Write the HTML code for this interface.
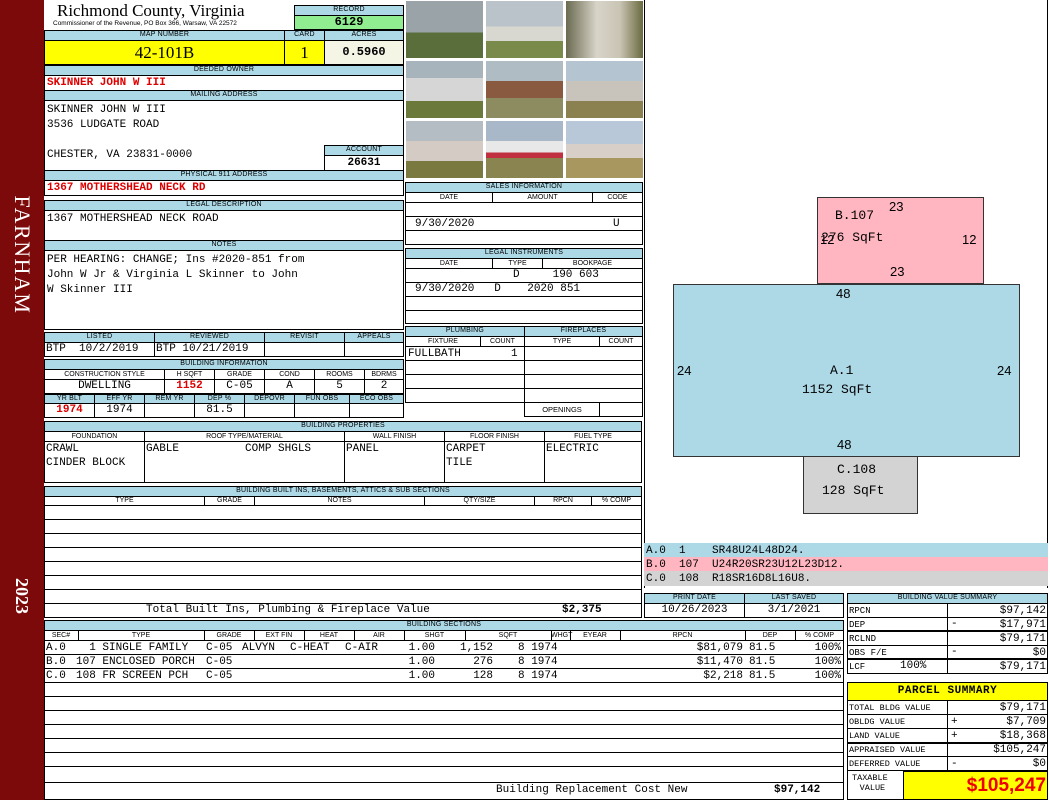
<!DOCTYPE html>
<html><head><meta charset="utf-8"><style>
*{box-sizing:border-box;margin:0;padding:0}
body{width:1050px;height:800px;position:relative;background:#fff;overflow:hidden;font-family:"Liberation Mono",monospace}
div{position:absolute}
.h{background:#add8e6;border:1px solid #000;font:7px/8px "Liberation Sans",sans-serif;text-align:center;color:#000;letter-spacing:.2px}
.b{border:1px solid #000;background:#fff}
.m{font-family:"Liberation Mono",monospace;font-size:11px;line-height:13px;white-space:pre}
.r{color:#d00;font-weight:bold}
.s{font:7px/9px "Liberation Sans",sans-serif;text-align:center}
.ln{height:1px;background:#000}
.ph{width:79px;height:59px;border:1px solid #fff}
.cr{text-align:right}
</style></head><body>
<div style="left:0;top:0;width:44px;height:800px;background:#7d0a0a"></div>
<div style="left:-58px;top:242px;width:160px;height:26px;transform:rotate(90deg);color:#fff;font:22px/26px 'Liberation Serif',serif;text-align:center;letter-spacing:1.5px">FARNHAM</div>
<div style="left:-13px;top:583px;width:70px;height:26px;transform:rotate(90deg);color:#fff;font:bold 18px/26px 'Liberation Serif',serif;text-align:center">2023</div>

<div style="left:57px;top:2px;font:17px/18px 'Liberation Serif',serif">Richmond County, Virginia</div>
<div style="left:53px;top:20px;font:6.5px/7px 'Liberation Sans',sans-serif">Commissioner of the Revenue, PO Box 366, Warsaw, VA 22572</div>
<div class="h" style="left:294px;top:5px;width:110px;height:11px">RECORD</div>
<div style="left:294px;top:15px;width:110px;height:15px;background:#90ee90;border:1px solid #000;font:bold 12px/13px 'Liberation Mono';text-align:center">6129</div>
<div class="h" style="left:44px;top:30px;width:241px;height:11px">MAP NUMBER</div>
<div class="h" style="left:284px;top:30px;width:41px;height:11px">CARD</div>
<div class="h" style="left:324px;top:30px;width:80px;height:11px">ACRES</div>
<div style="left:44px;top:40px;width:241px;height:25px;background:#ff0;border:1px solid #000;font:17px/23px 'Liberation Serif',serif;text-align:center">42-101B</div>
<div style="left:284px;top:40px;width:41px;height:25px;background:#ff0;border:1px solid #000;font:17px/23px 'Liberation Serif',serif;text-align:center">1</div>
<div style="left:324px;top:40px;width:80px;height:25px;background:#f5f5e6;border:1px solid #000;font:bold 12px/23px 'Liberation Mono';text-align:center">0.5960</div>
<div class="h" style="left:44px;top:65px;width:360px;height:11px">DEEDED OWNER</div>
<div class="b" style="left:44px;top:75px;width:360px;height:16px"></div>
<div class="m r" style="left:47px;top:77px">SKINNER JOHN W III</div>
<div class="h" style="left:44px;top:90px;width:360px;height:11px">MAILING ADDRESS</div>
<div class="b" style="left:44px;top:100px;width:360px;height:71px"></div>
<div class="m" style="left:47px;top:103px;line-height:15px">SKINNER JOHN W III
3536 LUDGATE ROAD

CHESTER, VA 23831-0000</div>
<div class="h" style="left:324px;top:145px;width:80px;height:11px">ACCOUNT</div>
<div class="b m" style="left:324px;top:155px;width:80px;height:16px;font-weight:bold;text-align:center;line-height:15px">26631</div>
<div class="h" style="left:44px;top:170px;width:360px;height:11px">PHYSICAL 911 ADDRESS</div>
<div class="b" style="left:44px;top:180px;width:360px;height:16px"></div>
<div class="m r" style="left:47px;top:182px">1367 MOTHERSHEAD NECK RD</div>
<div class="h" style="left:44px;top:200px;width:360px;height:11px">LEGAL DESCRIPTION</div>
<div class="b" style="left:44px;top:210px;width:360px;height:31px"></div>
<div class="m" style="left:47px;top:213px">1367 MOTHERSHEAD NECK ROAD</div>
<div class="h" style="left:44px;top:240px;width:360px;height:11px">NOTES</div>
<div class="b" style="left:44px;top:250px;width:360px;height:80px"></div>
<div class="m" style="left:47px;top:253px;line-height:15px">PER HEARING: CHANGE; Ins #2020-851 from
John W Jr &amp; Virginia L Skinner to John
W Skinner III</div>

<div class="h" style="left:44px;top:332px;width:111px;height:11px">LISTED</div>
<div class="h" style="left:154px;top:332px;width:111px;height:11px">REVIEWED</div>
<div class="h" style="left:264px;top:332px;width:81px;height:11px">REVISIT</div>
<div class="h" style="left:344px;top:332px;width:60px;height:11px">APPEALS</div>
<div class="b m" style="left:44px;top:342px;width:111px;height:15px;padding-left:1px">BTP  10/2/2019</div>
<div class="b m" style="left:154px;top:342px;width:111px;height:15px;padding-left:1px">BTP 10/21/2019</div>
<div class="b" style="left:264px;top:342px;width:81px;height:15px"></div>
<div class="b" style="left:344px;top:342px;width:60px;height:15px"></div>

<div class="h" style="left:44px;top:359px;width:360px;height:11px">BUILDING INFORMATION</div>
<div class="b s" style="left:44px;top:369px;width:121px;height:11px;line-height:9px">CONSTRUCTION STYLE</div>
<div class="b s" style="left:164px;top:369px;width:51px;height:11px;line-height:9px">H SQFT</div>
<div class="b s" style="left:214px;top:369px;width:51px;height:11px;line-height:9px">GRADE</div>
<div class="b s" style="left:264px;top:369px;width:51px;height:11px;line-height:9px">COND</div>
<div class="b s" style="left:314px;top:369px;width:51px;height:11px;line-height:9px">ROOMS</div>
<div class="b s" style="left:364px;top:369px;width:40px;height:11px;line-height:9px">BDRMS</div>
<div class="b m" style="left:44px;top:379px;width:121px;height:15px;text-align:center">DWELLING</div>
<div class="b m r" style="left:164px;top:379px;width:51px;height:15px;text-align:center">1152</div>
<div class="b m" style="left:214px;top:379px;width:51px;height:15px;text-align:center">C-05</div>
<div class="b m" style="left:264px;top:379px;width:51px;height:15px;text-align:center">A</div>
<div class="b m" style="left:314px;top:379px;width:51px;height:15px;text-align:center">5</div>
<div class="b m" style="left:364px;top:379px;width:40px;height:15px;text-align:center">2</div>
<div class="h" style="left:44px;top:394px;width:51px;height:10px;line-height:8px">YR BLT</div>
<div class="h" style="left:94px;top:394px;width:51px;height:10px;line-height:8px">EFF YR</div>
<div class="h" style="left:144px;top:394px;width:51px;height:10px;line-height:8px">REM YR</div>
<div class="h" style="left:194px;top:394px;width:51px;height:10px;line-height:8px">DEP %</div>
<div class="h" style="left:244px;top:394px;width:51px;height:10px;line-height:8px">DEPOVR</div>
<div class="h" style="left:294px;top:394px;width:56px;height:10px;line-height:8px">FUN OBS</div>
<div class="h" style="left:349px;top:394px;width:55px;height:10px;line-height:8px">ECO OBS</div>
<div class="b m r" style="left:44px;top:403px;width:51px;height:15px;text-align:center">1974</div>
<div class="b m" style="left:94px;top:403px;width:51px;height:15px;text-align:center">1974</div>
<div class="b" style="left:144px;top:403px;width:51px;height:15px"></div>
<div class="b m" style="left:194px;top:403px;width:51px;height:15px;text-align:center">81.5</div>
<div class="b" style="left:244px;top:403px;width:51px;height:15px"></div>
<div class="b" style="left:294px;top:403px;width:56px;height:15px"></div>
<div class="b" style="left:349px;top:403px;width:55px;height:15px"></div>

<div style="left:405px;top:0;width:240px;height:180px;background:#fff">
<div class="ph" style="left:0;top:0;background:linear-gradient(#9aa4a8 0 55%,#5a6e3c 55%)"></div>
<div class="ph" style="left:80px;top:0;background:linear-gradient(#b9c3c9 0 45%,#d8d8d0 45% 70%,#7a8a4a 70%)"></div>
<div class="ph" style="left:160px;top:0;background:linear-gradient(90deg,#6a6a50,#d8d4c8 40%,#c9c4b4 70%,#6a6a40)"></div>
<div class="ph" style="left:0;top:60px;background:linear-gradient(#a8b4bc 0 30%,#d6d6d6 30% 70%,#6b7a3a 70%)"></div>
<div class="ph" style="left:80px;top:60px;background:linear-gradient(#b0bcc4 0 35%,#8a5a40 35% 65%,#8c8c60 65%)"></div>
<div class="ph" style="left:160px;top:60px;background:linear-gradient(#b4c4d0 0 35%,#c8c4bc 35% 70%,#8a8050 70%)"></div>
<div class="ph" style="left:0;top:120px;background:linear-gradient(#b4bcc4 0 35%,#d4ccc4 35% 70%,#7a7a40 70%)"></div>
<div class="ph" style="left:80px;top:120px;background:linear-gradient(#a8b8c8 0 35%,#e8e8e8 35% 55%,#c03040 55% 65%,#8a8450 65%)"></div>
<div class="ph" style="left:160px;top:120px;background:linear-gradient(#b8c8d8 0 40%,#d8d0c8 40% 65%,#a89860 65%)"></div>
</div>

<div class="h" style="left:405px;top:182px;width:238px;height:11px">SALES INFORMATION</div>
<div class="b s" style="left:405px;top:192px;width:88px;height:11px;line-height:9px">DATE</div>
<div class="b s" style="left:492px;top:192px;width:101px;height:11px;line-height:9px">AMOUNT</div>
<div class="b s" style="left:592px;top:192px;width:51px;height:11px;line-height:9px">CODE</div>
<div class="b" style="left:405px;top:202px;width:238px;height:43px"></div>
<div class="ln" style="left:405px;top:216px;width:238px"></div>
<div class="ln" style="left:405px;top:230px;width:238px"></div>
<div class="m" style="left:415px;top:218px">9/30/2020</div>
<div class="m" style="left:613px;top:218px">U</div>
<div class="h" style="left:405px;top:248px;width:238px;height:11px">LEGAL INSTRUMENTS</div>
<div class="b s" style="left:405px;top:258px;width:88px;height:11px;line-height:9px">DATE</div>
<div class="b s" style="left:492px;top:258px;width:51px;height:11px;line-height:9px">TYPE</div>
<div class="b s" style="left:542px;top:258px;width:101px;height:11px;line-height:9px">BOOKPAGE</div>
<div class="b" style="left:405px;top:268px;width:238px;height:56px"></div>
<div class="ln" style="left:405px;top:282px;width:238px"></div>
<div class="ln" style="left:405px;top:296px;width:238px"></div>
<div class="ln" style="left:405px;top:310px;width:238px"></div>
<div class="m" style="left:513px;top:269px">D     190 603</div>
<div class="m" style="left:415px;top:283px">9/30/2020   D    2020 851</div>
<div class="h" style="left:405px;top:326px;width:120px;height:11px">PLUMBING</div>
<div class="h" style="left:524px;top:326px;width:119px;height:11px">FIREPLACES</div>
<div class="b s" style="left:405px;top:336px;width:76px;height:11px;line-height:9px">FIXTURE</div>
<div class="b s" style="left:480px;top:336px;width:45px;height:11px;line-height:9px">COUNT</div>
<div class="b s" style="left:524px;top:336px;width:76px;height:11px;line-height:9px">TYPE</div>
<div class="b s" style="left:599px;top:336px;width:44px;height:11px;line-height:9px">COUNT</div>
<div class="b" style="left:405px;top:346px;width:120px;height:57px"></div>
<div class="b" style="left:524px;top:346px;width:119px;height:57px"></div>
<div class="ln" style="left:405px;top:360px;width:238px"></div>
<div class="ln" style="left:405px;top:374px;width:238px"></div>
<div class="ln" style="left:405px;top:388px;width:238px"></div>
<div class="m" style="left:408px;top:348px">FULLBATH</div>
<div class="m" style="left:511px;top:348px">1</div>
<div class="b s" style="left:524px;top:402px;width:76px;height:15px;line-height:14px;font-size:7.5px">OPENINGS</div>
<div class="b" style="left:599px;top:402px;width:44px;height:15px"></div>

<div class="h" style="left:44px;top:421px;width:598px;height:11px">BUILDING PROPERTIES</div>
<div class="b s" style="left:44px;top:431px;width:101px;height:11px;line-height:9px">FOUNDATION</div>
<div class="b s" style="left:144px;top:431px;width:201px;height:11px;line-height:9px">ROOF TYPE/MATERIAL</div>
<div class="b s" style="left:344px;top:431px;width:101px;height:11px;line-height:9px">WALL FINISH</div>
<div class="b s" style="left:444px;top:431px;width:101px;height:11px;line-height:9px">FLOOR FINISH</div>
<div class="b s" style="left:544px;top:431px;width:98px;height:11px;line-height:9px">FUEL TYPE</div>
<div class="b" style="left:44px;top:441px;width:101px;height:42px"></div>
<div class="b" style="left:144px;top:441px;width:201px;height:42px"></div>
<div class="b" style="left:344px;top:441px;width:101px;height:42px"></div>
<div class="b" style="left:444px;top:441px;width:101px;height:42px"></div>
<div class="b" style="left:544px;top:441px;width:98px;height:42px"></div>
<div class="m" style="left:46px;top:442px;line-height:14px">CRAWL
CINDER BLOCK</div>
<div class="m" style="left:146px;top:442px;line-height:14px">GABLE          COMP SHGLS</div>
<div class="m" style="left:346px;top:442px;line-height:14px">PANEL</div>
<div class="m" style="left:446px;top:442px;line-height:14px">CARPET
TILE</div>
<div class="m" style="left:546px;top:442px;line-height:14px">ELECTRIC</div>

<div class="h" style="left:44px;top:486px;width:598px;height:11px">BUILDING BUILT INS, BASEMENTS, ATTICS &amp; SUB SECTIONS</div>
<div class="b s" style="left:44px;top:496px;width:161px;height:10px;line-height:8px">TYPE</div>
<div class="b s" style="left:204px;top:496px;width:51px;height:10px;line-height:8px">GRADE</div>
<div class="b s" style="left:254px;top:496px;width:171px;height:10px;line-height:8px">NOTES</div>
<div class="b s" style="left:424px;top:496px;width:111px;height:10px;line-height:8px">QTY/SIZE</div>
<div class="b s" style="left:534px;top:496px;width:58px;height:10px;line-height:8px">RPCN</div>
<div class="b s" style="left:591px;top:496px;width:51px;height:10px;line-height:8px">% COMP</div>
<div class="b" style="left:44px;top:505px;width:598px;height:113px"></div>
<div class="ln" style="left:44px;top:519px;width:598px"></div>
<div class="ln" style="left:44px;top:533px;width:598px"></div>
<div class="ln" style="left:44px;top:547px;width:598px"></div>
<div class="ln" style="left:44px;top:561px;width:598px"></div>
<div class="ln" style="left:44px;top:575px;width:598px"></div>
<div class="ln" style="left:44px;top:589px;width:598px"></div>
<div class="ln" style="left:44px;top:603px;width:598px"></div>
<div class="m" style="left:146px;top:604px">Total Built Ins, Plumbing &amp; Fireplace Value</div>
<div class="m" style="left:562px;top:604px;font-weight:bold">$2,375</div>

<div class="h" style="left:44px;top:620px;width:800px;height:11px">BUILDING SECTIONS</div>
<div class="b" style="left:44px;top:630px;width:800px;height:170px"></div>
<div class="s" style="left:44px;top:631px;width:34px">SEC#</div>
<div class="s" style="left:78px;top:631px;width:126px">TYPE</div>
<div class="s" style="left:204px;top:631px;width:50px">GRADE</div>
<div class="s" style="left:254px;top:631px;width:50px">EXT FIN</div>
<div class="s" style="left:304px;top:631px;width:50px">HEAT</div>
<div class="s" style="left:354px;top:631px;width:50px">AIR</div>
<div class="s" style="left:404px;top:631px;width:61px">SHGT</div>
<div class="s" style="left:465px;top:631px;width:86px">SQFT</div>
<div class="s" style="left:551px;top:631px;width:19px">WHGT</div>
<div class="s" style="left:570px;top:631px;width:50px">EYEAR</div>
<div class="s" style="left:620px;top:631px;width:125px">RPCN</div>
<div class="s" style="left:745px;top:631px;width:50px">DEP</div>
<div class="s" style="left:795px;top:631px;width:49px">% COMP</div>
<div style="left:78px;top:630px;width:1px;height:10px;background:#000"></div>
<div style="left:204px;top:630px;width:1px;height:10px;background:#000"></div>
<div style="left:254px;top:630px;width:1px;height:10px;background:#000"></div>
<div style="left:304px;top:630px;width:1px;height:10px;background:#000"></div>
<div style="left:354px;top:630px;width:1px;height:10px;background:#000"></div>
<div style="left:404px;top:630px;width:1px;height:10px;background:#000"></div>
<div style="left:465px;top:630px;width:1px;height:10px;background:#000"></div>
<div style="left:551px;top:630px;width:1px;height:10px;background:#000"></div>
<div style="left:570px;top:630px;width:1px;height:10px;background:#000"></div>
<div style="left:620px;top:630px;width:1px;height:10px;background:#000"></div>
<div style="left:745px;top:630px;width:1px;height:10px;background:#000"></div>
<div style="left:795px;top:630px;width:1px;height:10px;background:#000"></div>
<div class="ln" style="left:44px;top:640px;width:800px"></div>
<div class="ln" style="left:44px;top:654px;width:800px"></div>
<div class="ln" style="left:44px;top:668px;width:800px"></div>
<div class="ln" style="left:44px;top:682px;width:800px"></div>
<div class="ln" style="left:44px;top:696px;width:800px"></div>
<div class="ln" style="left:44px;top:710px;width:800px"></div>
<div class="ln" style="left:44px;top:724px;width:800px"></div>
<div class="ln" style="left:44px;top:738px;width:800px"></div>
<div class="ln" style="left:44px;top:752px;width:800px"></div>
<div class="ln" style="left:44px;top:766px;width:800px"></div>
<div class="ln" style="left:44px;top:782px;width:800px"></div>
<div class="m" style="left:46px;top:641px;line-height:14px">A.0
B.0
C.0</div>
<div class="m" style="left:76px;top:641px;line-height:14px">  1 SINGLE FAMILY
107 ENCLOSED PORCH
108 FR SCREEN PCH</div>
<div class="m" style="left:206px;top:641px;line-height:14px">C-05
C-05
C-05</div>
<div class="m" style="left:242px;top:641px;line-height:14px">ALVYN</div>
<div class="m" style="left:290px;top:641px;line-height:14px">C-HEAT</div>
<div class="m" style="left:345px;top:641px;line-height:14px">C-AIR</div>
<div class="m cr" style="left:395px;top:641px;width:40px;line-height:14px">1.00
1.00
1.00</div>
<div class="m cr" style="left:440px;top:641px;width:53px;line-height:14px">1,152
276
128</div>
<div class="m" style="left:518px;top:641px;line-height:14px">8 1974
8 1974
8 1974</div>
<div class="m cr" style="left:660px;top:641px;width:83px;line-height:14px">$81,079
$11,470
$2,218</div>
<div class="m" style="left:749px;top:641px;line-height:14px">81.5
81.5
81.5</div>
<div class="m cr" style="left:800px;top:641px;width:41px;line-height:14px">100%
100%
100%</div>
<div class="m" style="left:496px;top:784px">Building Replacement Cost New</div>
<div class="m" style="left:774px;top:784px;font-weight:bold">$97,142</div>

<div style="left:817px;top:197px;width:167px;height:87px;background:#ffb6c1;border:1px solid #333"></div>
<div style="left:673px;top:284px;width:347px;height:173px;background:#add8e6;border:1px solid #333"></div>
<div style="left:803px;top:456px;width:115px;height:58px;background:#d3d3d3;border:1px solid #333"></div>
<div style="left:835px;top:209px;font:13px/14px 'Liberation Mono'">B.107</div>
<div style="left:889px;top:200px;font:13px/14px 'Liberation Sans'">23</div>
<div style="left:821px;top:231px;font:13px/14px 'Liberation Mono'">276 SqFt</div>
<div style="left:820px;top:233px;font:13px/14px 'Liberation Sans'">12</div>
<div style="left:962px;top:233px;font:13px/14px 'Liberation Sans'">12</div>
<div style="left:890px;top:265px;font:13px/14px 'Liberation Sans'">23</div>
<div style="left:836px;top:287px;font:13px/14px 'Liberation Sans'">48</div>
<div style="left:830px;top:364px;font:13px/14px 'Liberation Mono'">A.1</div>
<div style="left:802px;top:383px;font:13px/14px 'Liberation Mono'">1152 SqFt</div>
<div style="left:677px;top:364px;font:13px/14px 'Liberation Sans'">24</div>
<div style="left:997px;top:364px;font:13px/14px 'Liberation Sans'">24</div>
<div style="left:837px;top:438px;font:13px/14px 'Liberation Sans'">48</div>
<div style="left:837px;top:463px;font:13px/14px 'Liberation Mono'">C.108</div>
<div style="left:822px;top:484px;font:13px/14px 'Liberation Mono'">128 SqFt</div>
<div style="left:644px;top:0;width:1px;height:588px;background:#000"></div>
<div style="left:1047px;top:0;width:1px;height:588px;background:#000"></div>
<div style="left:644px;top:543px;width:404px;height:14px;background:#add8e6"></div>
<div style="left:644px;top:557px;width:404px;height:14px;background:#ffb6c1"></div>
<div style="left:644px;top:571px;width:404px;height:15px;background:#d3d3d3"></div>
<div class="m" style="left:646px;top:544px;line-height:14px">A.0  1    SR48U24L48D24.
B.0  107  U24R20SR23U12L23D12.
C.0  108  R18SR16D8L16U8.</div>

<div class="h" style="left:644px;top:593px;width:101px;height:11px">PRINT DATE</div>
<div class="h" style="left:744px;top:593px;width:100px;height:11px">LAST SAVED</div>
<div class="b m" style="left:644px;top:603px;width:101px;height:15px;text-align:center">10/26/2023</div>
<div class="b m" style="left:744px;top:603px;width:100px;height:15px;text-align:center">3/1/2021</div>

<div class="h" style="left:847px;top:593px;width:201px;height:11px">BUILDING VALUE SUMMARY</div>
<div class="b" style="left:847px;top:603px;width:201px;height:71px"></div>
<div style="left:947px;top:603px;width:1px;height:71px;background:#000"></div>
<div class="ln" style="left:847px;top:617px;width:201px"></div>
<div style="left:847px;top:630px;width:201px;height:2px;background:#000"></div>
<div class="ln" style="left:847px;top:645px;width:201px"></div>
<div style="left:847px;top:658px;width:201px;height:2px;background:#000"></div>
<div class="m" style="left:849px;top:604px;font-size:9px;line-height:14px">RPCN
DEP
RCLND
OBS F/E
LCF</div>
<div class="m" style="left:900px;top:660px;font-size:11px">100%</div>
<div class="m" style="left:950px;top:604px;width:96px;text-align:right;line-height:14px">$97,142
$17,971
$79,171
$0
$79,171</div>
<div class="m" style="left:951px;top:618px">-</div>
<div class="m" style="left:951px;top:646px">-</div>

<div style="left:847px;top:682px;width:201px;height:19px;background:#ff0;border:1px solid #000;font:bold 11px/17px 'Liberation Mono';text-align:center;letter-spacing:.5px">PARCEL SUMMARY</div>
<div class="b" style="left:847px;top:700px;width:201px;height:100px"></div>
<div style="left:947px;top:700px;width:1px;height:71px;background:#000"></div>
<div class="ln" style="left:847px;top:714px;width:201px"></div>
<div class="ln" style="left:847px;top:728px;width:201px"></div>
<div style="left:847px;top:742px;width:201px;height:2px;background:#000"></div>
<div class="ln" style="left:847px;top:756px;width:201px"></div>
<div class="ln" style="left:847px;top:770px;width:201px"></div>
<div class="m" style="left:849px;top:701px;font-size:8.5px;line-height:14px">TOTAL BLDG VALUE
OBLDG VALUE
LAND VALUE
APPRAISED VALUE
DEFERRED VALUE</div>
<div class="m" style="left:950px;top:701px;width:96px;text-align:right;line-height:14px">$79,171
$7,709
$18,368
$105,247
$0</div>
<div class="m" style="left:951px;top:715px;line-height:14px">+
+

-</div>
<div class="m" style="left:852px;top:773px;font-size:8.5px;line-height:10px;text-align:center">TAXABLE
 VALUE</div>
<div style="left:903px;top:771px;width:145px;height:29px;background:#ff0;border:1px solid #000"></div>
<div style="left:903px;top:772px;width:143px;text-align:right;color:#e00;font:bold 19px/27px 'Liberation Sans',sans-serif">$105,247</div>
</body></html>
